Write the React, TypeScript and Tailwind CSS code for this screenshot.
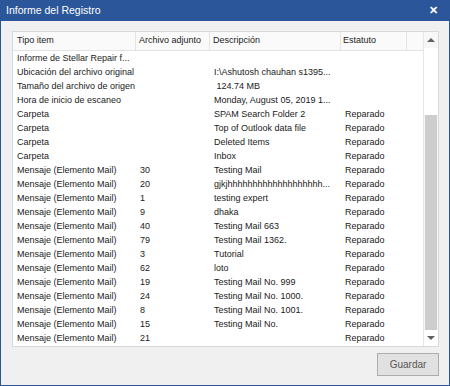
import React from "react";

interface Row {
  tipo: string;
  adjunto: string;
  desc: string;
  estatuto: string;
}

const MAIL = "Mensaje (Elemento Mail)";

const rows: Row[] = [
  { tipo: "Informe de Stellar Repair f...", adjunto: "", desc: "", estatuto: "" },
  { tipo: "Ubicación del archivo original", adjunto: "", desc: "I:\\Ashutosh chauhan s1395...", estatuto: "" },
  { tipo: "Tamaño del archivo de origen", adjunto: "", desc: " 124.74 MB", estatuto: "" },
  { tipo: "Hora de inicio de escaneo", adjunto: "", desc: "Monday, August 05, 2019 1...", estatuto: "" },
  { tipo: "Carpeta", adjunto: "", desc: "SPAM Search Folder 2", estatuto: "Reparado" },
  { tipo: "Carpeta", adjunto: "", desc: "Top of Outlook data file", estatuto: "Reparado" },
  { tipo: "Carpeta", adjunto: "", desc: "Deleted Items", estatuto: "Reparado" },
  { tipo: "Carpeta", adjunto: "", desc: "Inbox", estatuto: "Reparado" },
  { tipo: MAIL, adjunto: "30", desc: "Testing Mail", estatuto: "Reparado" },
  { tipo: MAIL, adjunto: "20", desc: "gjkjhhhhhhhhhhhhhhhhhhh...", estatuto: "Reparado" },
  { tipo: MAIL, adjunto: "1", desc: "testing expert", estatuto: "Reparado" },
  { tipo: MAIL, adjunto: "9", desc: "dhaka", estatuto: "Reparado" },
  { tipo: MAIL, adjunto: "40", desc: "Testing Mail 663", estatuto: "Reparado" },
  { tipo: MAIL, adjunto: "79", desc: "Testing Mail 1362.", estatuto: "Reparado" },
  { tipo: MAIL, adjunto: "3", desc: "Tutorial", estatuto: "Reparado" },
  { tipo: MAIL, adjunto: "62", desc: "loto", estatuto: "Reparado" },
  { tipo: MAIL, adjunto: "19", desc: "Testing Mail No. 999", estatuto: "Reparado" },
  { tipo: MAIL, adjunto: "24", desc: "Testing Mail No. 1000.", estatuto: "Reparado" },
  { tipo: MAIL, adjunto: "8", desc: "Testing Mail No. 1001.", estatuto: "Reparado" },
  { tipo: MAIL, adjunto: "15", desc: "Testing Mail No.", estatuto: "Reparado" },
  { tipo: MAIL, adjunto: "21", desc: "", estatuto: "Reparado" },
];

const cols = "grid grid-cols-[123px_74px_131px_66px_16px]";

function Scrollbar() {
  return (
    <div className="w-[16px] flex flex-col border-l border-[#e6e6e6] bg-[#f7f7f7]">
      <div className="h-[16px] flex items-center justify-center">
        <div className="w-0 h-0 border-l-[4px] border-r-[4px] border-b-[4px] border-l-transparent border-r-transparent border-b-[#606060]" />
      </div>
      <div className="h-[67px] bg-white" />
      <div className="flex-1 bg-[#cdcdcd] mx-[1px]" />
      <div className="h-[16px] flex items-center justify-center bg-white">
        <div className="w-0 h-0 border-l-[4px] border-r-[4px] border-t-[4px] border-l-transparent border-r-transparent border-t-[#606060]" />
      </div>
    </div>
  );
}

export default function App() {
  return (
    <div
      className="w-[450px] h-[386px] flex flex-col bg-[#2b579a] px-[1px] pb-[1px] text-[#1a1a1a]"
      style={{ fontFamily: '"Liberation Sans", Arial, sans-serif' }}
    >
      {/* Title bar */}
      <div className="h-[21px] flex items-center justify-between pl-[5px] pr-[11px] text-white">
        <span className="text-[10.5px]">Informe del Registro</span>
        <span className="text-[11px] font-bold leading-none">✕</span>
      </div>

      <div className="flex-1 bg-[#f0f0f0] pl-[11px] pr-[10px] pt-[10px] flex flex-col">
        {/* Table */}
        <div className="h-[316px] flex border border-[#d9d9d9] bg-white">
          <div className="flex-1 flex flex-col text-[9px]">
            <div className={`${cols} h-[20px] border-b border-[#e3e3e3] bg-[#fafafa]`}>
              <div className="flex items-center px-[4px] border-r border-[#e3e3e3]">Tipo item</div>
              <div className="flex items-center px-[3px] border-r border-[#e3e3e3]">Archivo adjunto</div>
              <div className="flex items-center px-[3px] border-r border-[#e3e3e3]">Descripción</div>
              <div className="flex items-center px-[2px] border-r border-[#e3e3e3]">Estatuto</div>
              <div />
            </div>
            <div className="pt-[1px]">
              {rows.map((r, i) => (
                <div key={i} className={`${cols} h-[14px] items-center whitespace-pre`}>
                  <div className="px-[4px]">{r.tipo}</div>
                  <div className="px-[4px]">{r.adjunto}</div>
                  <div className="px-[4px]">{r.desc}</div>
                  <div className="px-[4px]">{r.estatuto}</div>
                  <div />
                </div>
              ))}
            </div>
          </div>
          <Scrollbar />
        </div>

        {/* Footer */}
        <div className="flex justify-end pt-[6px]">
          <button className="w-[62px] h-[23px] bg-[#e1e1e1] border border-[#adadad] text-[10px] text-[#555]">
            Guardar
          </button>
        </div>
      </div>
    </div>
  );
}
